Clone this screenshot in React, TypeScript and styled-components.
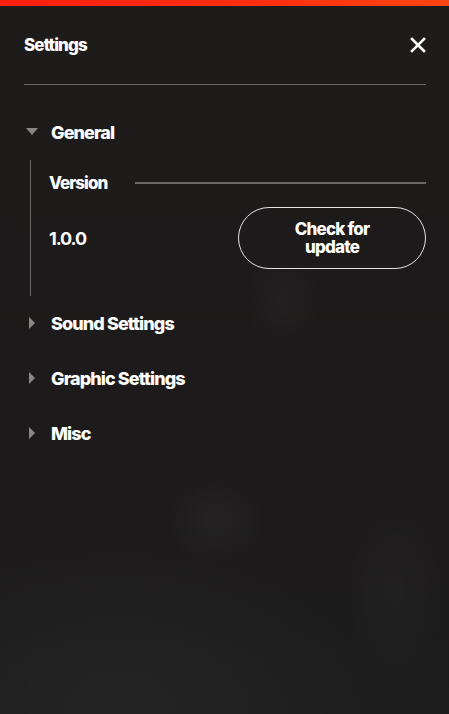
import React from 'react'
import styled, { createGlobalStyle } from 'styled-components'

const GlobalStyle = createGlobalStyle`
  html, body {
    margin: 0;
    padding: 0;
    height: 100%;
  }
  body {
    background: #1d1b1b;
    font-family: Inter, 'Noto Sans', sans-serif;
    color: #ffffff;
  }
  #root {
    min-height: 100%;
  }
`

const Panel = styled.div`
  display: flex;
  flex-direction: column;
  width: 449px;
  height: 714px;
  overflow: hidden;
  background:
    radial-gradient(ellipse 40px 50px at 283px 300px, rgba(255, 255, 255, 0.025), transparent),
    radial-gradient(ellipse 50px 45px at 215px 520px, rgba(255, 255, 255, 0.03), transparent),
    radial-gradient(ellipse 50px 90px at 395px 590px, rgba(255, 255, 255, 0.02), transparent),
    radial-gradient(ellipse 260px 160px at 120px 700px, rgba(255, 255, 255, 0.03), transparent),
    linear-gradient(180deg, #1e1b1b 0%, #1c1a1a 60%, #1e1d1e 100%);
`

const TopBar = styled.div`
  height: 6px;
  flex-shrink: 0;
  background: linear-gradient(90deg, #ff1f0f 0%, #ff3010 60%, #ff4512 100%);
`

const Body = styled.div`
  display: flex;
  flex-direction: column;
  padding: 0 23px 0 24px;
`

const Header = styled.header`
  display: flex;
  align-items: center;
  justify-content: space-between;
  height: 77px;
  padding-bottom: 1px;
  border-bottom: 1px solid #6a6767;
`

const Title = styled.h1`
  margin: 0;
  font-size: 17px;
  font-weight: 800;
  letter-spacing: -0.9px;
`

const CloseButton = styled.button`
  display: flex;
  align-items: center;
  justify-content: center;
  width: 20px;
  height: 20px;
  padding: 0;
  margin-right: -2px;
  border: none;
  background: none;
  color: #ffffff;
  cursor: pointer;
`

const Sections = styled.div`
  display: flex;
  flex-direction: column;
  padding-top: 24px;
`

const SectionHead = styled.button`
  display: flex;
  align-items: center;
  height: 46px;
  padding: 0;
  border: none;
  background: none;
  color: #ffffff;
  font-family: inherit;
  cursor: pointer;
  & + & {
    margin-top: 9px;
  }
`

const Caret = styled.span`
  display: flex;
  align-items: center;
  justify-content: center;
  width: 16px;
  margin-right: 11px;
  color: #8a8787;
`

const SectionLabel = styled.span`
  font-size: 18px;
  font-weight: 800;
  letter-spacing: -0.9px;
`

const SectionBody = styled.div`
  display: flex;
  flex-direction: column;
  margin: 5px 0 4px 6px;
  padding: 0 0 27px 18px;
  border-left: 1px solid #6a6767;
`

const GroupHead = styled.div`
  display: flex;
  align-items: center;
  gap: 28px;
  height: 46px;
`

const GroupLabel = styled.span`
  font-size: 17px;
  font-weight: 800;
  letter-spacing: -1px;
`

const Rule = styled.div`
  flex: 1;
  height: 2px;
  background: #6a6767;
`

const Row = styled.div`
  display: flex;
  align-items: center;
  justify-content: space-between;
  margin-top: 1px;
`

const Value = styled.span`
  font-size: 18px;
  font-weight: 700;
  letter-spacing: -1.1px;
`

const PillButton = styled.button`
  width: 188px;
  height: 62px;
  border: 1px solid #e6e4e4;
  border-radius: 31px;
  background: transparent;
  color: #ffffff;
  font-family: inherit;
  font-size: 17px;
  font-weight: 800;
  line-height: 18px;
  letter-spacing: -0.8px;
  padding: 0 40px;
  cursor: pointer;
`

const CaretIcon: React.FC<{ open?: boolean }> = ({ open }) =>
  open ? (
    <svg width="12" height="8" viewBox="0 0 12 8">
      <path d="M0 0 L12 0 L6 7 Z" fill="currentColor" />
    </svg>
  ) : (
    <svg width="8" height="12" viewBox="0 0 8 12">
      <path d="M1 0 L7 6 L1 12 Z" fill="currentColor" />
    </svg>
  )

const sections = ['Sound Settings', 'Graphic Settings', 'Misc']

export default function App() {
  return (
    <>
      <GlobalStyle />
      <Panel>
        <TopBar />
        <Body>
          <Header>
            <Title>Settings</Title>
            <CloseButton aria-label="Close">
              <svg width="16" height="16" viewBox="0 0 16 16">
                <path d="M2 2 L14 14 M14 2 L2 14" stroke="currentColor" strokeWidth="2.6" strokeLinecap="square" />
              </svg>
            </CloseButton>
          </Header>
          <Sections>
            <SectionHead>
              <Caret>
                <CaretIcon open />
              </Caret>
              <SectionLabel>General</SectionLabel>
            </SectionHead>
            <SectionBody>
              <GroupHead>
                <GroupLabel>Version</GroupLabel>
                <Rule />
              </GroupHead>
              <Row>
                <Value>1.0.0</Value>
                <PillButton>Check for update</PillButton>
              </Row>
            </SectionBody>
            {sections.map(name => (
              <SectionHead key={name}>
                <Caret>
                  <CaretIcon />
                </Caret>
                <SectionLabel>{name}</SectionLabel>
              </SectionHead>
            ))}
          </Sections>
        </Body>
      </Panel>
    </>
  )
}
